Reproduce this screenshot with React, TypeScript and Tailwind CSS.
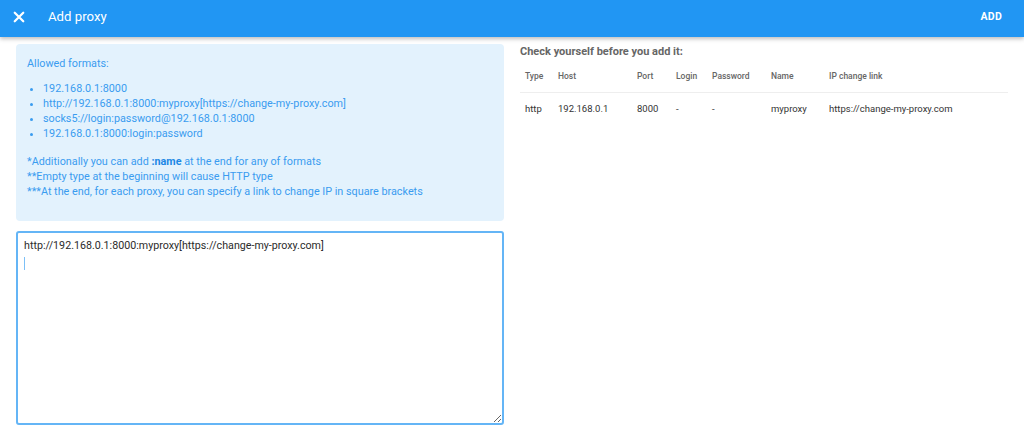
const formats = [
  "192.168.0.1:8000",
  "http://192.168.0.1:8000:myproxy[https://change-my-proxy.com]",
  "socks5://login:password@192.168.0.1:8000",
  "192.168.0.1:8000:login:password",
];

const columns = ["Type", "Host", "Port", "Login", "Password", "Name", "IP change link"];
const row = ["http", "192.168.0.1", "8000", "-", "-", "myproxy", "https://change-my-proxy.com"];

export default function App() {
  return (
    <div className="min-h-screen bg-white font-['Roboto',sans-serif]">
      <header className="relative z-10 flex h-[37px] items-center bg-[#2196f3] pb-[5px] pl-[13px] pr-[22px] pt-[2px] text-white shadow-[0_2px_4px_rgba(0,0,0,0.25)]">
        <svg viewBox="0 0 24 24" className="h-[12px] w-[12px]" fill="none" stroke="currentColor" strokeWidth="4.5" strokeLinecap="round">
          <path d="M3.5 3.5l17 17M20.5 3.5l-17 17" />
        </svg>
        <h1 className="ml-[23px] text-[13.2px] leading-none">Add proxy</h1>
        <button className="ml-auto text-[10.5px] font-bold tracking-wide">ADD</button>
      </header>

      <main className="grid grid-cols-2 gap-4 px-4 pt-[7px]">
        <section className="flex flex-col">
          <div className="h-[177px] rounded bg-[#e3f2fd] px-[11px] pt-[12px] text-[10.8px] leading-[15px] text-[#3a9cf0]">
            <p>Allowed formats:</p>
            <ul className="mt-[10px] list-disc pl-[16px]">
              {formats.map((f) => (
                <li key={f}>{f}</li>
              ))}
            </ul>
            <div className="mt-[13px]">
              <p>
                *Additionally you can add <b className="font-bold text-[#1e88e5]">:name</b> at the end for any of formats
              </p>
              <p>**Empty type at the beginning will cause HTTP type</p>
              <p>***At the end, for each proxy, you can specify a link to change IP in square brackets</p>
            </div>
          </div>
          <div className="relative mt-[10px] flex">
            <textarea
              defaultValue={"http://192.168.0.1:8000:myproxy[https://change-my-proxy.com]\n"}
              className="h-[194px] w-full resize-y rounded-[3px] border-2 border-[#64b5f6] px-[6px] pt-[5px] text-[10.7px] leading-[16px] text-[#2b2b2b] caret-transparent outline-none"
            />
            <span className="absolute left-[8px] top-[26px] h-[13px] w-px bg-[#7cc0f7]" />
          </div>
        </section>

        <section>
          <h2 className="text-[11px] font-bold leading-[15px] text-[#666]">Check yourself before you add it:</h2>
          <div className="mt-[11px] grid grid-cols-[33px_79px_39px_36px_59px_58px_1fr] border-b border-[#eee] pb-[10px] text-[8.5px] font-medium leading-[12px] text-[#666]">
            {columns.map((c) => (
              <div key={c} className="pl-[5px]">{c}</div>
            ))}
          </div>
          <div className="grid grid-cols-[33px_79px_39px_36px_59px_58px_1fr] pt-[8px] text-[9.5px] leading-[15px] text-[#333]">
            {row.map((c, i) => (
              <div key={i} className="pl-[5px]">{c}</div>
            ))}
          </div>
        </section>
      </main>
    </div>
  );
}
